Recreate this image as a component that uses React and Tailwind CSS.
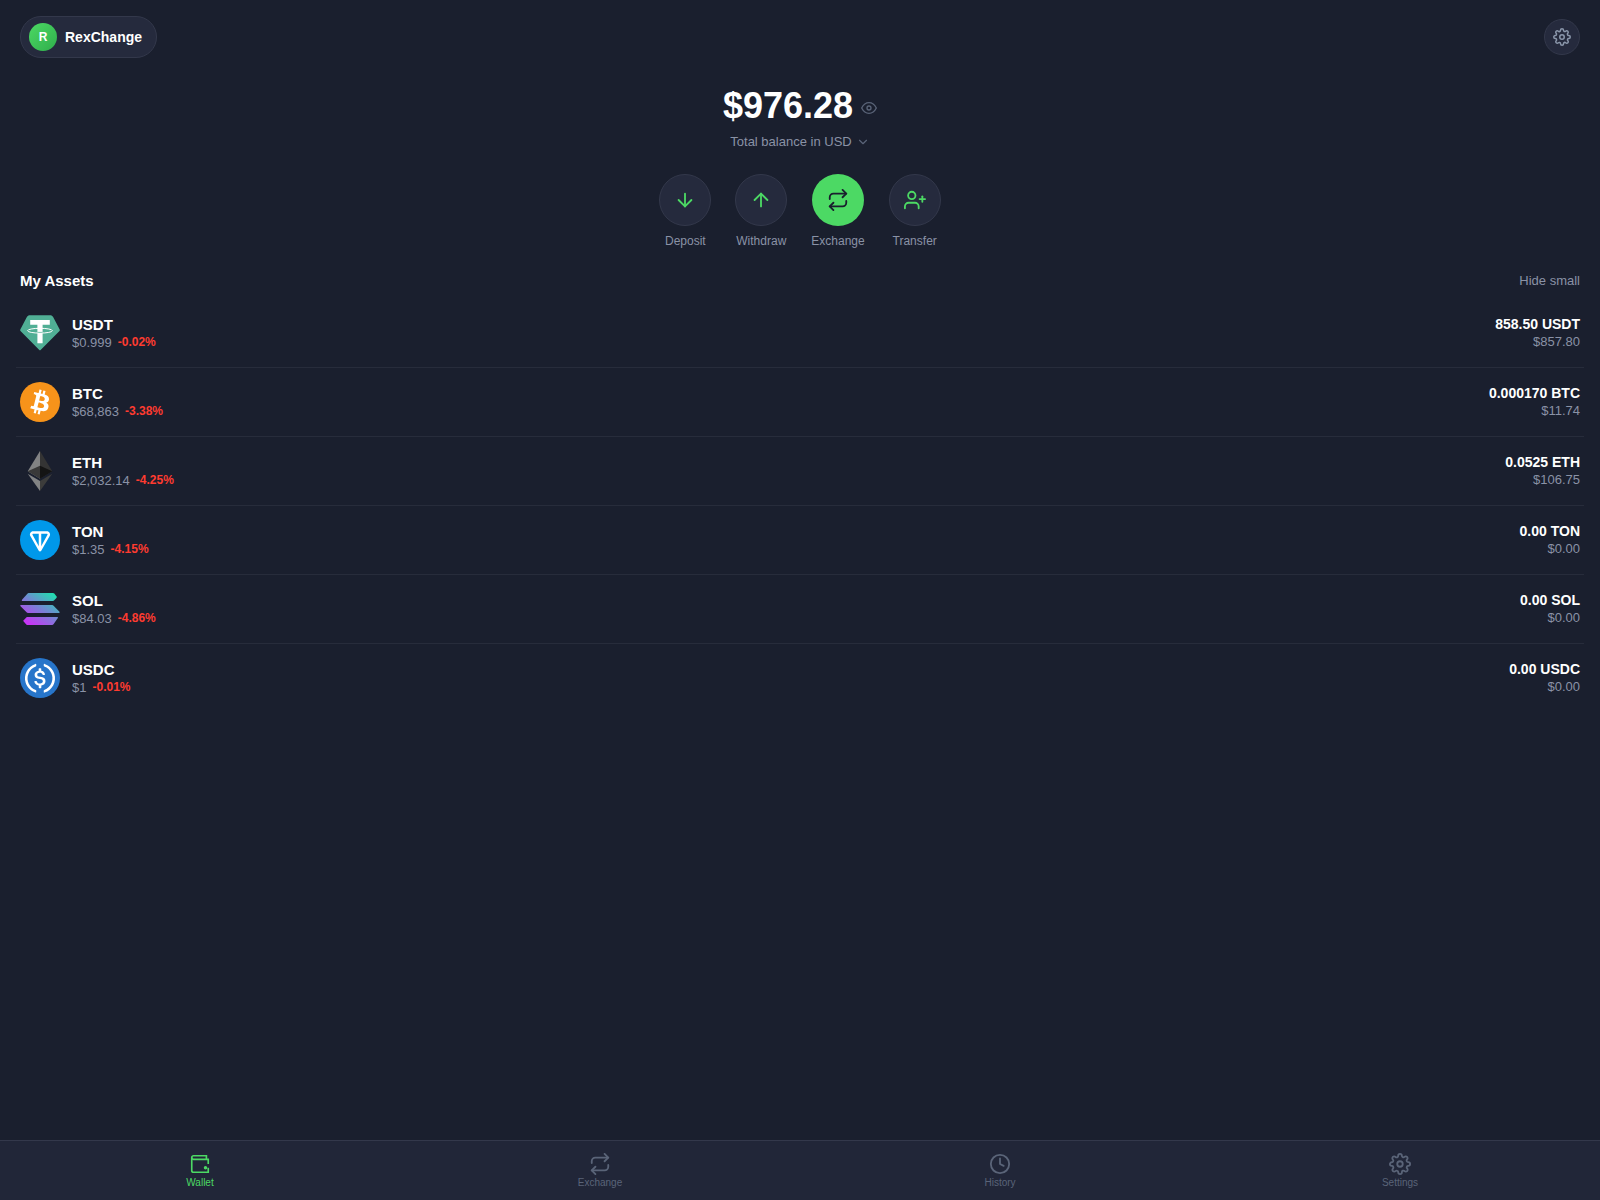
import { useState } from "react"
import {
  FiArrowDown,
  FiArrowUp,
  FiChevronDown,
  FiClock,
  FiEye,
  FiRepeat,
  FiSettings,
  FiUserPlus,
} from "react-icons/fi"

function UsdtLogo() {
  return (
    <svg viewBox="0 0 40 40" className="size-10" aria-hidden="true">
      <path
        d="M9.8 2.200h20.400c1.200 0 2.200.6 2.800 1.600l6.700 12.600c.3.500.2 1.100-.2 1.500L20.600 37c-.4.4-.9.4-1.300 0L.5 17.900c-.4-.4-.5-1-.2-1.500L7 3.800c.6-1 1.600-1.600 2.800-1.600z"
        fill="#50af95"
      />
      <path d="M10.200 7h19.600v4.800h-7.200v18.400h-5.200V11.800h-7.200z" fill="#fff" />
      <ellipse cx="20" cy="17.700" rx="12.400" ry="2.400" fill="none" stroke="#fff" strokeWidth="1" />
      <path d="M17.400 19.300q2.600.3 5.200 0" fill="none" stroke="#50af95" strokeWidth="0.700" />
    </svg>
  )
}

function BtcLogo() {
  return (
    <svg viewBox="0 0 32 32" className="size-10" aria-hidden="true">
      <circle cx="16" cy="16" r="16" fill="#f7931a" />
      <path
        d="M23.189 14.02c.314-2.096-1.283-3.223-3.465-3.975l.708-2.84-1.728-.43-.69 2.765c-.454-.114-.92-.22-1.385-.326l.695-2.783L15.596 6l-.708 2.839c-.376-.086-.746-.17-1.104-.26l.002-.009-2.384-.595-.46 1.846s1.283.294 1.256.312c.7.175.826.638.805 1.006l-.806 3.235c.048.012.11.03.18.057l-.183-.045-1.13 4.532c-.086.212-.303.531-.793.41.018.025-1.256-.313-1.256-.313l-.858 1.978 2.25.561c.418.105.828.215 1.231.318l-.715 2.872 1.727.43.708-2.84c.472.127.93.245 1.378.357l-.706 2.828 1.728.43.715-2.866c2.948.558 5.164.333 6.097-2.333.752-2.146-.037-3.385-1.588-4.192 1.13-.26 1.98-1.003 2.207-2.538zm-3.95 5.538c-.533 2.147-4.148.986-5.32.695l.95-3.805c1.172.293 4.929.872 4.37 3.11zm.535-5.569c-.487 1.953-3.495.96-4.47.717l.86-3.45c.975.243 4.118.696 3.61 2.733z"
        fill="#fff"
      />
    </svg>
  )
}

function EthLogo() {
  return (
    <svg viewBox="0 0 784.37 1277.39" className="size-10" aria-hidden="true">
      <polygon fill="#343434" points="392.07,0 383.5,29.11 383.5,873.74 392.07,882.29 784.13,650.54" />
      <polygon fill="#828384" points="392.07,0 0,650.54 392.07,882.29 392.07,472.33" />
      <polygon fill="#3c3c3b" points="392.07,956.52 387.24,962.41 387.24,1263.28 392.07,1277.38 784.37,724.89" />
      <polygon fill="#828384" points="392.07,1277.38 392.07,956.52 0,724.89" />
      <polygon fill="#141414" points="392.07,882.29 784.13,650.54 392.07,472.33" />
      <polygon fill="#393939" points="0,650.54 392.07,882.29 392.07,472.33" />
    </svg>
  )
}

function TonLogo() {
  return (
    <svg viewBox="0 0 56 56" className="size-10" aria-hidden="true">
      <circle cx="28" cy="28" r="28" fill="#0098ea" />
      <path
        d="M37.5603 15.6277H18.4386C14.9228 15.6277 12.6944 19.4202 14.4632 22.4861L26.2644 42.9409C27.0345 44.2765 28.9644 44.2765 29.7345 42.9409L41.5381 22.4861C43.3045 19.4251 41.0761 15.6277 37.5627 15.6277H37.5603ZM26.2548 36.8068L23.6847 31.8327L17.4833 20.7414C17.0742 20.0315 17.5795 19.1218 18.4362 19.1218H26.2524V36.8092L26.2548 36.8068ZM38.5108 20.739L32.3118 31.8351L29.7417 36.8068V19.1194H37.5579C38.4146 19.1194 38.9199 20.0291 38.5108 20.739Z"
        fill="#fff"
      />
    </svg>
  )
}

function SolLogo() {
  return (
    <svg viewBox="0 0 40 40" className="size-10" aria-hidden="true">
      <defs>
        <linearGradient id="sol" x1="8" y1="38" x2="32" y2="2" gradientUnits="userSpaceOnUse">
          <stop offset="0.08" stopColor="#c735f5" />
          <stop offset="0.5" stopColor="#7a7fd6" />
          <stop offset="1" stopColor="#19e6ac" />
        </linearGradient>
      </defs>
      <g fill="url(#sol)">
        <path d="M7.600 4.500 8.500 4H33l1.300.5 2.300 3v1.200L34 11.600l-1 .4H1.700l.5-1.500z" />
        <path d="M.5 16h31.800l1 .5 6.200 6.200v1.300H7.800l-1-.5L.3 17z" />
        <path d="M6.800 28H38l-.5 1.500-4 5.800-1.200.7H7.200l-1-.5-2.500-3v-1.200z" />
      </g>
    </svg>
  )
}

function UsdcLogo() {
  return (
    <svg viewBox="0 0 2000 2000" className="size-10" aria-hidden="true">
      <circle cx="1000" cy="1000" r="1000" fill="#2775ca" />
      <path
        d="M1275 1158.33c0-145.83-87.5-195.83-262.5-216.66-125-16.67-150-50-150-108.34s41.67-95.83 125-95.83c75 0 116.67 25 137.5 87.5 4.17 12.5 16.67 20.83 29.17 20.83h66.66c16.67 0 29.17-12.5 29.17-29.16v-4.17c-16.67-91.67-91.67-162.5-187.5-170.83v-100c0-16.67-12.5-29.17-33.33-33.34h-62.5c-16.67 0-29.17 12.5-33.34 33.34v95.83c-125 16.67-204.16 100-204.16 204.17 0 137.5 83.33 191.66 258.33 212.5 116.67 20.83 154.17 45.83 154.17 112.5s-58.34 112.5-137.5 112.5c-108.34 0-145.84-45.84-158.34-108.34-4.16-16.66-16.66-25-29.16-25h-70.84c-16.66 0-29.16 12.5-29.16 29.17v4.17c16.66 104.16 83.33 179.16 220.83 200v100c0 16.66 12.5 29.16 33.33 33.33h62.5c16.67 0 29.17-12.5 33.34-33.33v-100c125-20.84 208.33-108.34 208.33-220.84z"
        fill="#fff"
      />
      <path
        d="M787.5 1595.83c-325-116.66-491.67-479.16-370.83-800 62.5-175 200-308.33 370.83-370.83 16.67-8.33 25-20.83 25-41.67V325c0-16.67-8.33-29.17-25-33.33-4.17 0-12.5 0-16.67 4.16-395.83 125-612.5 545.84-487.5 941.67 75 233.33 254.17 412.5 487.5 487.5 16.67 8.33 33.34 0 37.5-16.67 4.17-4.16 4.17-8.33 4.17-16.66v-58.34c0-12.5-12.5-29.16-25-37.5zM1229.17 295.83c-16.67-8.33-33.34 0-37.5 16.67-4.17 4.17-4.17 8.33-4.17 16.67v58.33c0 16.67 12.5 33.33 25 41.67 325 116.66 491.67 479.16 370.83 800-62.5 175-200 308.33-370.83 370.83-16.67 8.33-25 20.83-25 41.67V1700c0 16.67 8.33 29.17 25 33.33 4.17 0 12.5 0 16.67-4.16 395.83-125 612.5-545.84 487.5-941.67-75-237.5-258.34-416.67-487.5-491.67z"
        fill="#fff"
      />
    </svg>
  )
}

function WalletIcon({ size }) {
  return (
    <svg
      viewBox="0 0 24 24"
      width={size}
      height={size}
      fill="none"
      stroke="currentColor"
      strokeWidth="1.8"
      aria-hidden="true"
    >
      <path d="M21 12V7H5a2 2 0 0 1 0-4h14v4" />
      <path d="M3 5v14a2 2 0 0 0 2 2h16v-5" />
      <circle cx="18" cy="16" r="1" fill="currentColor" />
    </svg>
  )
}

const assets = [
  { symbol: "USDT", price: "$0.999", change: "-0.02%", amount: "858.50", value: 857.8, Logo: UsdtLogo },
  { symbol: "BTC", price: "$68,863", change: "-3.38%", amount: "0.000170", value: 11.74, Logo: BtcLogo },
  { symbol: "ETH", price: "$2,032.14", change: "-4.25%", amount: "0.0525", value: 106.75, Logo: EthLogo },
  { symbol: "TON", price: "$1.35", change: "-4.15%", amount: "0.00", value: 0, Logo: TonLogo },
  { symbol: "SOL", price: "$84.03", change: "-4.86%", amount: "0.00", value: 0, Logo: SolLogo },
  { symbol: "USDC", price: "$1", change: "-0.01%", amount: "0.00", value: 0, Logo: UsdcLogo },
]

const actions = [
  { label: "Deposit", Icon: FiArrowDown },
  { label: "Withdraw", Icon: FiArrowUp },
  { label: "Exchange", Icon: FiRepeat, primary: true },
  { label: "Transfer", Icon: FiUserPlus },
]

const tabs = [
  { label: "Wallet", Icon: WalletIcon },
  { label: "Exchange", Icon: FiRepeat },
  { label: "History", Icon: FiClock },
  { label: "Settings", Icon: FiSettings },
]

function AssetRow({ asset }) {
  const { symbol, price, change, amount, value, Logo } = asset

  return (
    <li className="flex items-center gap-3 px-1 py-[14px] border-b border-[#272c3b] last:border-b-0">
      <Logo />
      <div className="flex-1 flex flex-col gap-[2px]">
        <span className="text-[15px] leading-[17px] font-bold">{symbol}</span>
        <span className="flex items-center gap-[6px] text-[13px] leading-[15px] text-[#8a92a6]">
          {price}
          <span className="text-[12px] font-bold text-[#ff3b30]">{change}</span>
        </span>
      </div>
      <div className="flex flex-col gap-[2px] text-right">
        <span className="text-[14px] leading-4 font-bold">
          {amount} {symbol}
        </span>
        <span className="text-[13px] leading-4 text-[#8a92a6]">${value.toFixed(2)}</span>
      </div>
    </li>
  )
}

function App() {
  const [tab, setTab] = useState("Wallet")
  const [hidden, setHidden] = useState(false)
  const [hideSmall, setHideSmall] = useState(false)

  const visible = hideSmall ? assets.filter((a) => a.value >= 1) : assets

  return (
    <div className="min-h-screen flex flex-col bg-[#1a1f2e] text-white font-['Liberation_Sans',Arial,sans-serif]">
      <header className="flex items-center justify-between px-5 py-4">
        <button
          type="button"
          className="flex items-center gap-2 rounded-full border border-[#33384b] bg-[#252a3d] py-[6px] pl-2 pr-[14px]"
        >
          <span className="size-7 rounded-full bg-linear-135 from-[#4cd964] to-[#2fae4c] flex items-center justify-center text-[12px] font-bold">
            R
          </span>
          <span className="text-[14px] font-bold">RexChange</span>
        </button>
        <button
          type="button"
          aria-label="Settings"
          className="size-9 rounded-full border border-[#33384b] bg-[#252a3d] text-[#8a96aa] flex items-center justify-center"
        >
          <FiSettings size={18} />
        </button>
      </header>

      <main className="flex-1">
        <section className="flex flex-col items-center pt-3">
          <div className="flex items-center gap-2">
            <h1 className="text-[36px] leading-10 font-bold">{hidden ? "••••••" : "$976.28"}</h1>
            <button
              type="button"
              aria-label="Toggle balance"
              onClick={() => setHidden(!hidden)}
              className="mt-1 text-[#5a6478]"
            >
              <FiEye size={16} />
            </button>
          </div>
          <button type="button" className="mt-2 flex items-center gap-1 text-[13px] leading-[15px] text-[#8a92a6]">
            Total balance in USD
            <FiChevronDown size={14} className="text-[#5a6478]" />
          </button>

          <div className="mt-[25px] flex gap-6">
            {actions.map(({ label, Icon, primary }) => (
              <button
                key={label}
                type="button"
                className="flex flex-col items-center gap-2 text-[12px] leading-[14px] text-[#8a92a6]"
              >
                <span
                  className={
                    primary
                      ? "size-[52px] rounded-full flex items-center justify-center bg-[#4cd964] text-[#1a1f2e]"
                      : "size-[52px] rounded-full flex items-center justify-center border border-[#33384b] bg-[#252a3d] text-[#4cd964]"
                  }
                >
                  <Icon size={22} />
                </span>
                {label}
              </button>
            ))}
          </div>
        </section>

        <section className="mt-6">
          <div className="flex items-center justify-between px-5">
            <h2 className="text-[15px] leading-[17px] font-bold">My Assets</h2>
            <button
              type="button"
              onClick={() => setHideSmall(!hideSmall)}
              className="text-[13px] leading-[15px] text-[#8a92a6]"
            >
              Hide small
            </button>
          </div>
          <ul className="mt-[10px] px-4">
            {visible.map((asset) => (
              <AssetRow key={asset.symbol} asset={asset} />
            ))}
          </ul>
        </section>
      </main>

      <nav className="sticky bottom-0 grid grid-cols-4 border-t border-[#33384b] bg-[#212638]">
        {tabs.map(({ label, Icon }) => (
          <button
            key={label}
            type="button"
            onClick={() => setTab(label)}
            className={
              tab === label
                ? "flex flex-col items-center gap-[2px] py-3 text-[10px] leading-[11px] text-[#4cd964]"
                : "flex flex-col items-center gap-[2px] py-3 text-[10px] leading-[11px] text-[#5a6478]"
            }
          >
            <Icon size={22} />
            {label}
          </button>
        ))}
      </nav>
    </div>
  )
}

export default App
